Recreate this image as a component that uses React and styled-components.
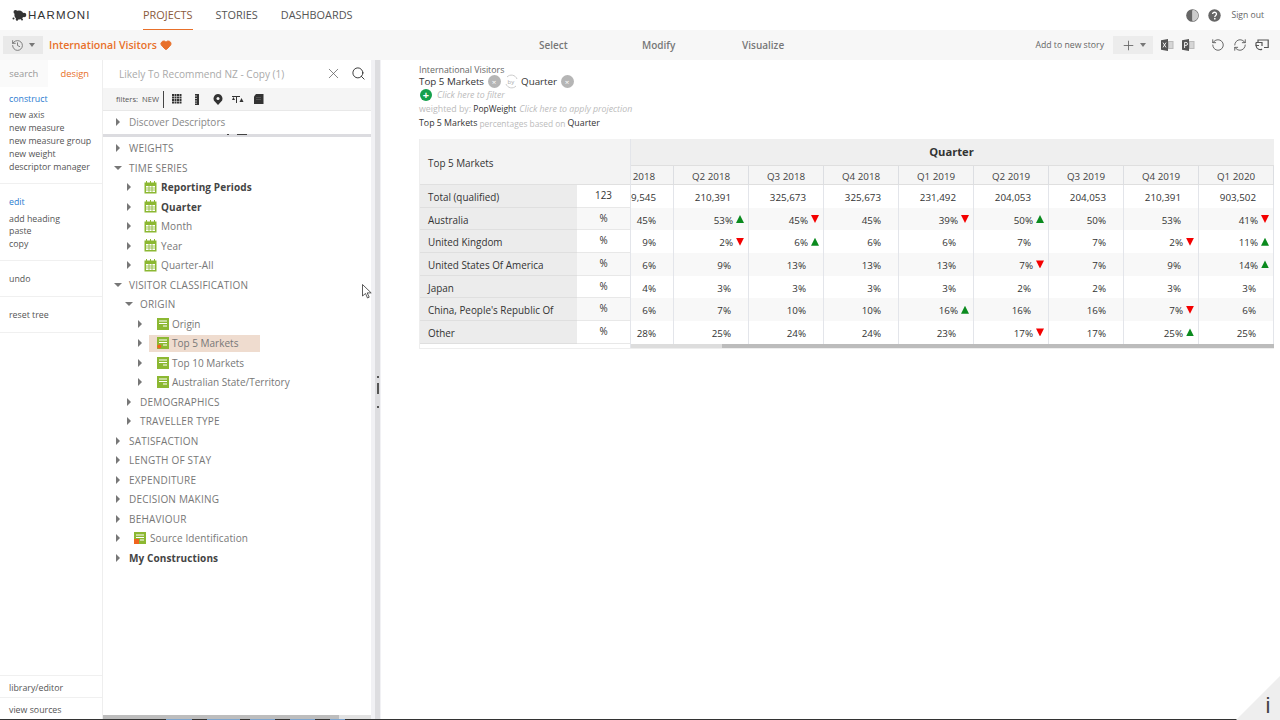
import React from 'react';
import styled, { createGlobalStyle } from 'styled-components';
import { History, X, Search, Heart, RotateCcw, RefreshCw, Plus } from 'lucide-react';

const Global = createGlobalStyle`
  html, body { margin: 0; padding: 0; background: #fff; overflow: hidden; }
  body { font-family: "Open Sans", "Noto Sans", sans-serif; color: #444; }
  * { box-sizing: border-box; }
`;

const ORANGE = '#e8702a';

const Page = styled.div`
  position: relative; width: 1280px; height: 720px; overflow: hidden;
  display: flex; flex-direction: column;
`;
const TopBar = styled.header`
  height: 30px; display: flex; align-items: stretch; background: #fff; flex: none;
`;
const Brand = styled.div`
  width: 143px; padding-left: 12px; display: flex; align-items: center; gap: 1px; flex: none;
  font-family: "Liberation Sans", sans-serif; font-size: 11.5px; letter-spacing: 1.2px; color: #333;
`;
const Nav = styled.nav`display: flex; gap: 23px;`;
const NavItem = styled.a`
  display: flex; align-items: center; height: 30px; font-size: 10.9px; font-weight: 500;
  color: ${p => (p.$active ? '#8a5a3c' : '#555')};
  border-bottom: 1px solid ${p => (p.$active ? ORANGE : 'transparent')};
`;
const TopRight = styled.div`
  margin-left: auto; display: flex; align-items: center; padding-right: 16px; gap: 9px;
`;
const SignOut = styled.span`font-size: 8.6px; color: #666; margin-left: 1px;`;

const SubBar = styled.div`
  height: 30px; flex: none; background: #f7f7f7; display: grid;
  grid-template-columns: 420px 440px 1fr; align-items: center;
`;
const HistoryBtn = styled.div`
  width: 40px; height: 18px; margin-left: 3px; background: #e9e9e9; color: #666;
  display: flex; align-items: center; justify-content: center; gap: 5px;
`;
const Caret = styled.i`
  display: block; width: 0; height: 0; flex: none;
  border-left: 3.5px solid transparent; border-right: 3.5px solid transparent; border-top: 4px solid #777;
`;
const Crumb = styled.div`
  display: flex; align-items: center; gap: 3px; font-size: 10.6px; font-weight: 600; color: ${ORANGE};
`;
const SubLeft = styled.div`display: flex; align-items: center; gap: 6px;`;
const Modes = styled.div`display: flex; padding-left: 119px;`;
const Mode = styled.span`
  font-size: 10px; font-weight: 600; color: #777; width: ${p => p.$w}px; white-space: nowrap;
`;
const SubRight = styled.div`
  display: flex; align-items: center; justify-content: flex-end; padding-right: 11px; color: #666;
`;
const StoryLabel = styled.span`font-size: 8.7px; color: #666; margin-right: 9px;`;
const AddBtn = styled.div`
  width: 40px; height: 18px; background: #ececec; display: flex; align-items: center; justify-content: center;
  gap: 4px; margin-right: 8px; color: #666;
`;
const IconGroup = styled.div`display: flex; align-items: center; gap: ${p => p.$gap}px; margin-right: ${p => p.$mr || 0}px;`;

const Main = styled.div`flex: 1; min-height: 0; display: flex;`;
const LeftNav = styled.aside`
  width: 103px; flex: none; display: flex; flex-direction: column; background: #fff; border-right: 1px solid #eee;
`;
const Tabs = styled.div`display: flex; height: 27px; flex: none;`;
const Tab = styled.div`
  display: flex; align-items: center; justify-content: center; font-size: 9.4px;
  width: ${p => p.$w}px;
  background: ${p => (p.$active ? '#fff' : '#fafafa')};
  color: ${p => (p.$active ? ORANGE : '#999')};
`;
const NavGroup = styled.div`
  padding: ${p => p.$pad};
  border-bottom: 1px solid #f0f0f0;
  display: flex; flex-direction: column;
`;
const NavHead = styled.div`font-size: 8.8px; line-height: 13px; color: #2a7bd0; margin-bottom: ${p => p.$mb}px;`;
const NavLink = styled.div`font-size: 8.8px; line-height: 12.9px; color: #555; white-space: nowrap;`;
const NavFoot = styled.div`margin-top: auto;`;
const FootItem = styled.div`
  height: 22px; border-top: 1px solid #f0f0f0; padding: 2px 0 0 9px; display: flex; align-items: center;
  font-size: 8.8px; color: #555;
`;

const Panel = styled.section`
  width: 268px; flex: none; display: flex; flex-direction: column; position: relative;
`;
const SearchRow = styled.div`
  height: 28px; flex: none; display: flex; align-items: center; padding: 0 5px 1px 16px; color: #aaa; font-size: 10.1px;
`;
const SearchText = styled.span`flex: 1; white-space: nowrap;`;
const ToolRow = styled.div`
  height: 23px; flex: none; background: #f5f5f5; display: flex; align-items: center; padding-left: 13px;
  border-bottom: 1px solid #e8e8e8; color: #333;
`;
const FilterLabel = styled.span`font-size: 7.6px; color: #555; white-space: nowrap;`;
const FilterNew = styled.span`font-size: 7.6px; color: #555; margin-left: 4px; padding-right: 4px; border-right: 1px solid #444; line-height: 17px;`;
const Tools = styled.div`display: flex; align-items: center; margin-left: 2.5px;`;
const Tool = styled.span`width: 20.5px; display: flex; justify-content: center;`;
const Discover = styled.div`
  height: 23px; flex: none; display: flex; align-items: center; padding: 0 0 1px 12px;
  font-size: 10px; color: #888;
`;
const Band = styled.div`
  height: 3px; flex: none; background: #dcdce0; display: flex; align-items: flex-start; padding-left: 124px; gap: 8px;
`;
const BandBit = styled.i`display: block; height: 1px; width: ${p => p.$w}px; background: #444;`;
const Tree = styled.div`flex: 1; min-height: 0; padding-top: 1.5px;`;
const TreeRow = styled.div`
  height: 19.5px; display: flex; align-items: center; padding-left: ${p => 12 + p.$level * 11}px;
  position: relative;
`;
const Arrow = styled.i`
  display: block; width: 0; height: 0; flex: none; margin-right: ${p => (p.$open ? p.$gap - 2 : p.$gap)}px;
  ${p => p.$open
    ? 'border-left:4px solid transparent;border-right:4px solid transparent;border-top:4px solid #777;margin-left:-1px;'
    : 'border-top:4px solid transparent;border-bottom:4px solid transparent;border-left:4px solid #777;margin-left:1px;'}
`;
const Label = styled.span`
  font-size: 10px; white-space: nowrap; letter-spacing: ${p => p.$ls}px;
  font-weight: ${p => (p.$bold ? 700 : 400)};
  color: ${p => (p.$bold ? '#444' : '#777')};
`;
const Picked = styled.div`
  display: flex; align-items: center; align-self: stretch; margin: 1px 0 1px -8px; padding-left: 8px; width: 111px;
  background: ${p => (p.$on ? '#efdccf' : 'transparent')};
  gap: 3px;
`;
const IconGap = styled.span`width: 4px; flex: none;`;
const ScrollBar = styled.div`
  height: 4px; flex: none; background: #e2e2e2; display: flex;
`;
const ScrollThumb = styled.div`width: 236px; background: #bdbdbd;`;

const Splitter = styled.div`
  width: 10px; flex: none; display: flex;
  background: linear-gradient(90deg, #f1f1f4 0 4px, #dddde0 4px 9px, #f1f1f4 9px);
  position: relative;
`;
const Grip = styled.i`
  position: absolute; left: 6px; top: 323px; width: 2px; height: 11px; background: #555;
  &::before { content: ''; position: absolute; top: -7px; left: 0; width: 2px; height: 2px; background: #555; }
  &::after { content: ''; position: absolute; top: 23px; left: 0; width: 2px; height: 2px; background: #555; }
`;

const Content = styled.main`flex: 1; min-width: 0; padding: 4px 6px 0 38px; display: flex; flex-direction: column;`;
const Summary = styled.div`height: 75px; flex: none; display: flex; flex-direction: column; font-size: 8.8px; color: #444;`;
const Line = styled.div`display: flex; align-items: center; height: ${p => p.$h}px; white-space: nowrap;`;
const SumTitle = styled.span`font-size: ${p => p.$s || 8.8}px; color: ${p => p.$c || '#666'};`;
const Ghost = styled.span`
  color: #bbb; font-size: ${p => p.$s || 8.8}px; font-style: ${p => (p.$i ? 'italic' : 'normal')}; margin: 0 ${p => p.$m}px;
`;
const Close = styled.span`
  width: 13px; height: 13px; border-radius: 50%; background: #b5b5b5; color: #fff; font-size: 8px; line-height: 13px;
  text-align: center; margin: 0 3.5px;
`;
const AddDot = styled.span`
  width: 12px; height: 12px; border-radius: 50%; background: #14a04c; color: #fff; font-size: 11px; font-weight: 700;
  line-height: 11px; text-align: center; margin-right: 5px; margin-left: 1px;
`;

const Table = styled.div`
  display: flex; height: 210px; flex: none; border: 1px solid #eee; border-width: 0 0 1px 1px;
`;
const Fixed = styled.div`width: 210px; flex: none; display: flex; flex-direction: column;`;
const Corner = styled.div`
  height: 46px; flex: none; background: #f3f3f3; border-bottom: 1px solid #e0e0e0;
  display: flex; align-items: center; padding: 2px 0 0 8px; font-size: 9.9px; color: #333;
`;
const FixedRow = styled.div`height: 22.7px; flex: none; display: grid; grid-template-columns: 157px 53px;`;
const RowLabel = styled.div`
  background: #ececec; border-bottom: 1px solid #dfdfdf; padding: 2px 0 0 8px; display: flex; align-items: center;
  font-size: 9.9px; color: #333; white-space: nowrap;
`;
const Unit = styled.div`
  background: ${p => (p.$alt ? '#f8f8f8' : '#fff')}; border-bottom: 1px solid #e8e8e8; display: flex; align-items: flex-start;
  padding: 3px 0 0 0; justify-content: center; font-size: 9.9px; color: #333;
`;
const Scroller = styled.div`flex: 1; min-width: 0; overflow: hidden; display: flex; flex-direction: column; border-left: 1px solid #e3e5ea;`;
const Inner = styled.div`width: 675px; margin-left: -32px; flex: none;`;
const QuarterHead = styled.div`
  height: 27px; background: #efefef; border-bottom: 1px solid #dfdfdf; display: flex; align-items: center; justify-content: center;
  font-size: 11.2px; font-weight: 700; color: #333; padding: 0 0 2px 30px;
`;
const Cols = styled.div`display: grid; grid-template-columns: repeat(9, 75px);`;
const ColHead = styled.div`
  height: 19px; background: #f5f5f5; border-right: 1px solid #dcdee2; border-bottom: 1px solid #dfdfdf; padding-top: 2px;
  display: flex; align-items: center; justify-content: center; font-size: 9.8px; color: #444; white-space: nowrap;
`;
const Cell = styled.div`
  height: 22.7px; background: ${p => (p.$alt ? '#f8f8f8' : '#fff')}; border-right: 1px solid #e3e5ea;
  display: flex; align-items: center; justify-content: flex-end; padding: 2px 4px 0 0;
  font-size: 9.8px; color: #333; white-space: nowrap;
`;
const Trend = styled.i`
  display: block; width: 8px; height: 8px; margin: 0 0 2px ${p => (p.$up === undefined ? 5 : 3)}px; flex: none;
  clip-path: ${p => (p.$up ? 'polygon(50% 0,100% 100%,0 100%)' : 'polygon(0 0,100% 0,50% 100%)')};
  background: ${p => (p.$up ? '#0a8a1e' : '#f40000')};
  visibility: ${p => (p.$up === undefined ? 'hidden' : 'visible')};
`;
const HScroll = styled.div`height: 5px; flex: none; background: #dddddd; display: flex; justify-content: flex-end;`;
const HThumb = styled.div`width: 552px; background: #bcbcbc;`;

const InfoCorner = styled.div`
  position: absolute; right: 0; bottom: 0; width: 44px; height: 44px; background: #eee;
  clip-path: polygon(100% 0, 100% 100%, 0 100%);
`;
const Info = styled.span`
  position: absolute; left: 1265.5px; top: 695px; font-size: 22px; line-height: 22px; color: #444; font-family: "Liberation Sans", sans-serif;
`;
const Cursor = styled.svg`position: absolute; left: 362px; top: 284px;`;
const Taskbar = styled.div`
  height: 1px; flex: none;
  background: linear-gradient(90deg, #333 0 166px, #7ea6d0 166px 192px, #333 192px 207px, #7ea6d0 207px 240px, #333 240px 250px, #7ea6d0 250px 275px, #333 275px 290px, #7ea6d0 290px 315px, #333 315px 330px, #7ea6d0 330px 345px, #333 345px);
`;

const Logo = () => (
  <svg width="15" height="12" viewBox="0 0 15 12" fill="#333">
    <circle cx="7" cy="6" r="4.6" /><circle cx="3.5" cy="3" r="2" /><circle cx="12" cy="6" r="2.3" />
    <circle cx="1.5" cy="9.5" r="1" /><circle cx="5" cy="10.5" r="1.2" /><circle cx="10" cy="10.5" r="1" />
  </svg>
);
const Contrast = () => (
  <svg width="13" height="13" viewBox="0 0 13 13">
    <circle cx="6.5" cy="6.5" r="5.7" fill="none" stroke="#666" strokeWidth="1.2" />
    <path d="M6.5 .8a5.7 5.7 0 0 0 0 11.4z" fill="#666" />
    <path d="M6.5 .8a5.7 5.7 0 0 1 0 11.4z" fill="#ccc" />
  </svg>
);
const Help = () => (
  <svg width="13" height="13" viewBox="0 0 13 13">
    <circle cx="6.5" cy="6.5" r="6.2" fill="#666" />
    <path d="M4.6 5.1c0-2.5 3.9-2.4 3.9-.1 0 1.4-1.7 1.4-1.7 2.9" fill="none" stroke="#fff" strokeWidth="1.3" />
    <circle cx="6.8" cy="9.7" r=".85" fill="#fff" />
  </svg>
);
const Office = ({ letter }) => (
  <svg width="13" height="12" viewBox="0 0 13 12">
    <path d="M6 2h6.5v8H6z" fill="#bbb" />
    <path d="M0 1.2 7 0v12L0 10.8z" fill="#555" />
    {letter === 'x'
      ? <path d="M2 3.6l3 4.8M5 3.6L2 8.4" stroke="#fff" strokeWidth=".9" />
      : <path d="M2.6 9V3.4h1.4a1.4 1.4 0 0 1 0 3H2.6" stroke="#fff" strokeWidth=".9" fill="none" />}
    <path d="M8 4h3.5M8 6h3.5M8 8h3.5" stroke="#fff" strokeWidth=".8" />
  </svg>
);
const Present = () => (
  <svg width="14" height="13" viewBox="0 0 14 13" fill="none" stroke="#555" strokeWidth="1.2">
    <path d="M3 3V1h10.2v7.5H9" /><path d="M1 3.5h6v3.5" /><path d="M1 3.5v3h3" /><path d="M1 6.5c.5 4 4.5 5 6 3.5" />
  </svg>
);
const GridTool = () => (
  <svg width="10" height="10" viewBox="0 0 10 10" fill="#333">
    {[0, 1, 2, 3].flatMap(r => [0, 1, 2, 3].map(c => <rect key={r + '-' + c} x={c * 2.5} y={r * 2.5} width="2" height="2" />))}
  </svg>
);
const Ruler = () => (
  <svg width="10" height="11" viewBox="0 0 10 11"><path d="M3 0h4v11H3z" fill="#333" /><path d="M3 2h2M3 4.5h2M3 7h2M3 9.2h2" stroke="#ddd" strokeWidth=".8" /></svg>
);
const Pin = () => (
  <svg width="10" height="11" viewBox="0 0 10 11"><path d="M5 0a4.5 4.5 0 0 1 3 7.8L5 11 2 7.8A4.5 4.5 0 0 1 5 0z" fill="#333" /><circle cx="5" cy="4.4" r="1.5" fill="#f5f5f5" /></svg>
);
const Scale = () => (
  <svg width="12" height="11" viewBox="0 0 12 11"><path d="M0 2.5h8M4.5 2v7" stroke="#333" strokeWidth="1" /><path d="M1.5 3 0 6h3zM9.5 4l-2 4h4z" fill="#333" /></svg>
);
const Note = () => (
  <svg width="11" height="11" viewBox="0 0 11 11"><path d="M3 0h7.5v10H1V2.5z" fill="#333" /><path d="M3 3.5h5M3 5.5h5" stroke="#666" strokeWidth=".6" /></svg>
);
const Calendar = () => (
  <svg width="13" height="13" viewBox="0 0 13 13" style={{ flex: 'none' }}>
    <rect x=".5" y="1.5" width="12" height="11" fill="#8cb832" />
    <path d="M2.5 0v2M6.5 0v2M10.5 0v2" stroke="#8cb832" />
    <path d="M2 5h9v6H2z" fill="#fff" />
    <path d="M5 5v6M8 5v6M2 7h9M2 9h9" stroke="#8cb832" strokeWidth=".8" />
  </svg>
);
const ListIcon = ({ dot, mixed }) => (
  <svg width="12" height="12" viewBox="0 0 12 12" style={{ flex: 'none' }}>
    <rect width="12" height="12" fill="#8cb832" />
    <path d="M2 3h8M2 5.5h8M6 8h4" stroke="#fff" strokeWidth="1" />
    {dot && <circle cx="2.2" cy="9.5" r="2" fill="#f0641e" />}
    {mixed && <rect x="0" y="7" width="5" height="5" fill="#f0641e" />}
  </svg>
);
const ByBadge = () => (
  <svg width="15" height="15" viewBox="0 0 15 15" style={{ margin: '0 2px 0 0' }} fill="none" stroke="#ccc">
    <path d="M3 3a6 6 0 0 1 10 2M12 12a6 6 0 0 1-10-2" />
    <text x="3.5" y="10" fontSize="6" fill="#aaa" stroke="none" fontFamily="Open Sans">by</text>
  </svg>
);

const tree = [
  { l: 0, t: 'WEIGHTS' },
  { l: 0, t: 'TIME SERIES', open: true },
  { l: 1, t: 'Reporting Periods', icon: 'cal', bold: true },
  { l: 1, t: 'Quarter', icon: 'cal', bold: true },
  { l: 1, t: 'Month', icon: 'cal' },
  { l: 1, t: 'Year', icon: 'cal' },
  { l: 1, t: 'Quarter-All', icon: 'cal' },
  { l: 0, t: 'VISITOR CLASSIFICATION', open: true },
  { l: 1, t: 'ORIGIN', open: true },
  { l: 2, t: 'Origin', icon: 'list' },
  { l: 2, t: 'Top 5 Markets', icon: 'list', on: true },
  { l: 2, t: 'Top 10 Markets', icon: 'list' },
  { l: 2, t: 'Australian State/Territory', icon: 'list' },
  { l: 1, t: 'DEMOGRAPHICS' },
  { l: 1, t: 'TRAVELLER TYPE' },
  { l: 0, t: 'SATISFACTION' },
  { l: 0, t: 'LENGTH OF STAY' },
  { l: 0, t: 'EXPENDITURE' },
  { l: 0, t: 'DECISION MAKING' },
  { l: 0, t: 'BEHAVIOUR' },
  { l: 0, t: 'Source Identification', icon: 'mixed' },
  { l: 0, t: 'My Constructions', bold: true },
];

const quarters = ['Q1 2018', 'Q2 2018', 'Q3 2018', 'Q4 2018', 'Q1 2019', 'Q2 2019', 'Q3 2019', 'Q4 2019', 'Q1 2020'];
const rows = [
  { n: 'Total (qualified)', u: '123', v: ['9,545', '210,391', '325,673', '325,673', '231,492', '204,053', '204,053', '210,391', '903,502'] },
  { n: 'Australia', u: '%', alt: true, v: ['45%', '53%+', '45%-', '45%', '39%-', '50%+', '50%', '53%', '41%-'] },
  { n: 'United Kingdom', u: '%', v: ['9%', '2%-', '6%+', '6%', '6%', '7%', '7%', '2%-', '11%+'] },
  { n: 'United States Of America', u: '%', alt: true, v: ['6%', '9%', '13%', '13%', '13%', '7%-', '7%', '9%', '14%+'] },
  { n: 'Japan', u: '%', v: ['4%', '3%', '3%', '3%', '3%', '2%', '2%', '3%', '3%'] },
  { n: "China, People's Republic Of", u: '%', alt: true, v: ['6%', '7%', '10%', '10%', '16%+', '16%', '16%', '7%-', '6%'] },
  { n: 'Other', u: '%', v: ['28%', '25%', '24%', '24%', '23%', '17%-', '17%', '25%+', '25%'] },
];

const TreeItem = ({ r }) => {
  const gap = { mixed: 14, cal: 13, list: 15 }[r.icon] ?? 9;
  const ls = r.t === r.t.toUpperCase() ? 0.2 : r.icon === 'list' ? 0 : 0.1;
  return (
    <TreeRow $level={r.l}>
      <Arrow $open={r.open} $gap={gap} />
      {r.icon === 'list' ? (
        <Picked $on={r.on}>
          <ListIcon dot={r.on} />
          <Label $ls={ls}>{r.t}</Label>
        </Picked>
      ) : (
        <>
          {r.icon === 'cal' && <Calendar />}
          {r.icon === 'mixed' && <ListIcon mixed />}
          {r.icon && <IconGap />}
          <Label $bold={r.bold} $ls={ls}>{r.t}</Label>
        </>
      )}
    </TreeRow>
  );
};

export default function App() {
  return (
    <Page>
      <Global />
      <TopBar>
        <Brand><Logo />HARMONI</Brand>
        <Nav>
          <NavItem $active>PROJECTS</NavItem>
          <NavItem>STORIES</NavItem>
          <NavItem>DASHBOARDS</NavItem>
        </Nav>
        <TopRight>
          <Contrast /><Help /><SignOut>Sign out</SignOut>
        </TopRight>
      </TopBar>
      <SubBar>
        <SubLeft>
          <HistoryBtn><History size={13} strokeWidth={1.5} /><Caret /></HistoryBtn>
          <Crumb>International Visitors <Heart size={12} fill={ORANGE} color={ORANGE} /></Crumb>
        </SubLeft>
        <Modes>
          <Mode $w={103}>Select</Mode>
          <Mode $w={100}>Modify</Mode>
          <Mode $w={60}>Visualize</Mode>
        </Modes>
        <SubRight>
          <StoryLabel>Add to new story</StoryLabel>
          <AddBtn><Plus size={15} strokeWidth={1.4} /><Caret /></AddBtn>
          <IconGroup $gap={8} $mr={16}><Office letter="x" /><Office letter="p" /></IconGroup>
          <IconGroup $gap={8}>
            <RotateCcw size={14} strokeWidth={1.5} color="#555" />
            <RefreshCw size={14} strokeWidth={1.5} color="#555" />
            <Present />
          </IconGroup>
        </SubRight>
      </SubBar>
      <Main>
        <LeftNav>
          <Tabs><Tab $w={48}>search</Tab><Tab $w={55} $active>design</Tab></Tabs>
          <NavGroup $pad="6px 0 9px 9px">
            <NavHead $mb={3}>construct</NavHead>
            {['new axis', 'new measure', 'new measure group', 'new weight', 'descriptor manager'].map(t => <NavLink key={t}>{t}</NavLink>)}
          </NavGroup>
          <NavGroup $pad="12px 0 9px 9px">
            <NavHead $mb={4}>edit</NavHead>
            {['add heading', 'paste', 'copy'].map(t => <NavLink key={t}>{t}</NavLink>)}
          </NavGroup>
          <NavGroup $pad="12px 0 10px 9px"><NavLink>undo</NavLink></NavGroup>
          <NavGroup $pad="12px 0 10px 9px"><NavLink>reset tree</NavLink></NavGroup>
          <NavFoot>
            <FootItem>library/editor</FootItem>
            <FootItem>view sources</FootItem>
          </NavFoot>
        </LeftNav>
        <Panel>
          <SearchRow>
            <SearchText>Likely To Recommend NZ - Copy (1)</SearchText>
            <X size={17} strokeWidth={1} color="#555" style={{ marginRight: 9 }} />
            <Search size={15} strokeWidth={1.4} color="#222" />
          </SearchRow>
          <ToolRow>
            <FilterLabel>filters:</FilterLabel>
            <FilterNew>NEW</FilterNew>
            <Tools>
              <Tool><GridTool /></Tool><Tool><Ruler /></Tool><Tool><Pin /></Tool><Tool><Scale /></Tool><Tool><Note /></Tool>
            </Tools>
          </ToolRow>
          <Discover><Arrow $gap={9} />Discover Descriptors</Discover>
          <Band><BandBit $w={2} /><BandBit $w={10} /></Band>
          <Tree>{tree.map(r => <TreeItem key={r.t} r={r} />)}</Tree>
          <ScrollBar><ScrollThumb /></ScrollBar>
        </Panel>
        <Splitter><Grip /></Splitter>
        <Content>
          <Summary>
            <Line $h={11}><SumTitle>International Visitors</SumTitle></Line>
            <Line $h={13}>
              <SumTitle $s={9.8} $c="#333">Top 5 Markets</SumTitle><Close>×</Close><ByBadge /><SumTitle $s={9.8} $c="#333">Quarter</SumTitle><Close>×</Close>
            </Line>
            <Line $h={13}><AddDot>+</AddDot><Ghost $i $m={0}>Click here to filter</Ghost></Line>
            <Line $h={15}><Ghost $m={0}>weighted by:</Ghost>&nbsp;<SumTitle $s={8.5} $c="#333">PopWeight</SumTitle><Ghost $i $m={3}>Click here to apply projection</Ghost></Line>
            <Line $h={14}><SumTitle $c="#333">Top 5 Markets</SumTitle><Ghost $s={8.4} $m={2}>percentages based on</Ghost><SumTitle $c="#333">Quarter</SumTitle></Line>
          </Summary>
          <Table>
            <Fixed>
              <Corner>Top 5 Markets</Corner>
              {rows.map(r => (
                <FixedRow key={r.n}>
                  <RowLabel>{r.n}</RowLabel>
                  <Unit $alt={r.alt}>{r.u}</Unit>
                </FixedRow>
              ))}
            </Fixed>
            <Scroller>
              <Inner>
                <QuarterHead>Quarter</QuarterHead>
                <Cols>
                  {quarters.map(q => <ColHead key={q}>{q}</ColHead>)}
                  {rows.flatMap(r => r.v.map((v, i) => {
                    const sign = v.slice(-1);
                    const up = sign === '+' ? true : sign === '-' ? false : undefined;
                    return (
                      <Cell key={r.n + i} $alt={r.alt}>
                        {up === undefined ? v : v.slice(0, -1)}
                        <Trend $up={up} />
                      </Cell>
                    );
                  }))}
                </Cols>
              </Inner>
              <HScroll><HThumb /></HScroll>
            </Scroller>
          </Table>
        </Content>
      </Main>
      <Taskbar />
      <InfoCorner />
      <Info>i</Info>
      <Cursor width="10" height="15" viewBox="0 0 10 15">
        <path d="M.5.5v11.5l3-2.5 2 4.5 1.7-.8-2-4.3h4z" fill="#fff" stroke="#333" strokeWidth=".8" />
      </Cursor>
    </Page>
  );
}
